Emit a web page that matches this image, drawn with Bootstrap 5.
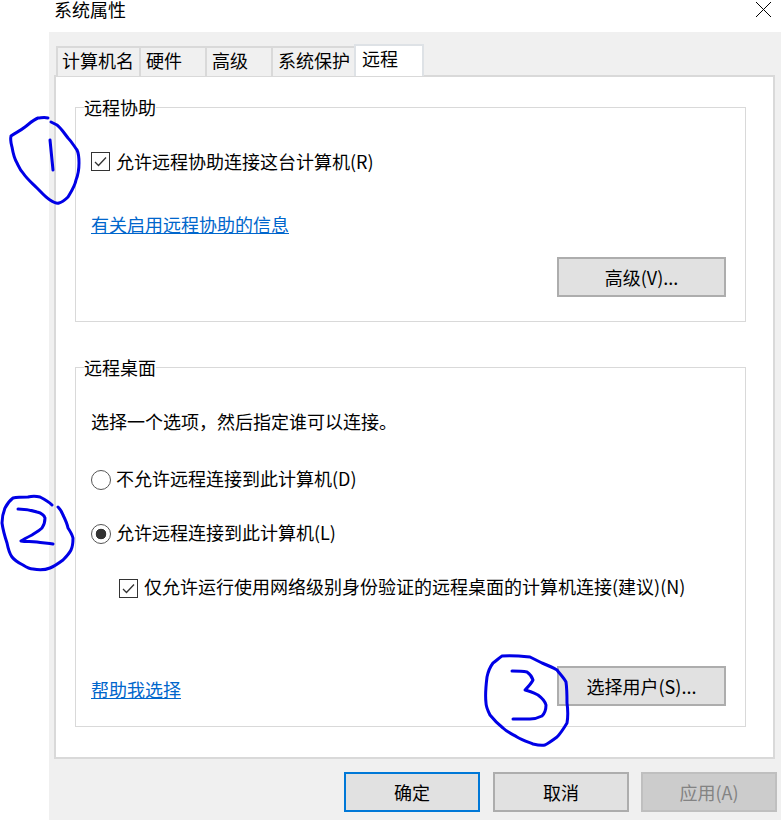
<!DOCTYPE html>
<html lang="zh-CN">
<head>
<meta charset="utf-8">
<title>系统属性</title>
<link href="https://cdn.jsdelivr.net/npm/bootstrap@5.3.0/dist/css/bootstrap.min.css" rel="stylesheet">
<style>
html, body { margin: 0; background: #fff; }
body { width: 781px; height: 820px; overflow: hidden; position: relative; color: #000;
  font-family: "Noto Sans CJK SC", "Liberation Sans", sans-serif; font-size: 18px; line-height: 24px; }
.title-row { height: 32px; padding-left: 54px; padding-right: 10px; line-height: 18px; }
.close-x { width: 15px; height: 15px; margin-top: 2px; }
.sheet { margin-left: 49px; height: 788px; background: #f0f0f0; padding: 12px 6px 0 5px; }
.tab-strip { height: 32px; padding-left: 2px; border: 0; flex-wrap: nowrap; position: relative; z-index: 1; }
.tab-strip .nav-link { height: 30px; margin: 2px 0 0; padding: 0 0 0 5px; border: 2px solid #d9d9d9; border-bottom: 0; border-right-width: 0; border-radius: 0;
  color: #000; background: #f0f0f0; line-height: 25px; font-size: 18px; white-space: nowrap; }
.tab-strip .nav-link.active { height: 32px; margin-top: 0; background: #fff; border-right-width: 2px; color: #000; padding-left: 6px; }
.tab-strip .nav-link.tab-a { width: 83px; padding-left: 4px; }
.tab-b { width: 66px; } .tab-c { width: 83px; } .tab-d { width: 70px; }
.pane { height: 684px; margin-top: -1px; background: #fff; border: 2px solid #d9d9d9; padding: 0 27px 0 19px; }
.grp { margin: 0; padding: 0 19px 0 15px; border: 1px solid #d9d9d9; min-width: 0; }
.grp legend { float: none; width: auto; margin: 0 0 0 -7px; padding: 0 0; font-size: 18px; line-height: 20px; height: 20px; background: #fff; }
.grp-one { height: 225px; margin-top: 20px; }
.grp-two { height: 370px; margin-top: 35px; }
.opt { display: flex; align-items: center; gap: 6px; margin: 0; min-height: 24px; padding: 0; }
.opt-round { gap: 5px; }
.opt .form-check-input { width: 19px; height: 19px; margin: 0; float: none; flex: none; background-color: #fff; border: 1px solid #333; border-radius: 0; box-shadow: none; background-size: 15px; }
.opt .form-check-input.drop-two { margin-top: 4px; }
.opt .form-check-input[type=radio] { width: 20px; height: 20px; border-radius: 50%; border-color: #555; }
.opt .form-check-input[type=checkbox]:checked { background-image: url("data:image/svg+xml,%3Csvg xmlns='http://www.w3.org/2000/svg' viewBox='0 0 15 15'%3E%3Cpath d='M2 8l3.5 3.5L13 3.5' fill='none' stroke='%23333' stroke-width='1.3'/%3E%3C/svg%3E"); }
.opt .form-check-input[type=radio]:checked { background-image: radial-gradient(circle, #333 0 5px, transparent 5.6px); background-size: 100%; }
.lnk { color: #0066cc; display: inline-block; line-height: 24px; }
.lnk-low { margin-top: 6px; }
.gbtn { flex: none; width: 169px; height: 40px; padding: 0; border: 2px solid #adadad; border-radius: 0; background: #e1e1e1; color: #000; font-size: 18px; line-height: 36px; }
.gbtn.main { border-color: #0078d7; }
.gbtn.off, .gbtn.off:disabled { background: #ccc; border-color: #bfbfbf; color: #838383; opacity: 1; margin-left: -1px; }
.foot-btn { width: 136px; }
.foot-row { margin-top: 13px; gap: 13px; margin-left: 290px; }
.top-a { margin-top: 32px; } .top-b { margin-top: 39px; } .top-c { margin-top: 21px; }
.top-d { margin-top: 32px; } .top-e { margin-top: 33px; } .top-f { margin-top: 30px; } .top-g { margin-top: 30px; }
.indent-a { margin-left: 28px; }
.row-end { margin-top: 68px; }
.ink { position: absolute; left: 0; top: 0; pointer-events: none; }
.ink path { fill: none; stroke: #0000e6; stroke-width: 3; stroke-linecap: round; stroke-linejoin: round; }
</style>
</head>
<body>
<div class="title-row d-flex justify-content-between align-items-start">
  <span>系统属性</span>
  <svg class="close-x" viewBox="0 0 15 15"><path d="M0 0L15 15M15 0L0 15" stroke="#000" stroke-width="1" fill="none"/></svg>
</div>
<div class="sheet">
  <ul class="nav nav-tabs tab-strip">
    <li class="nav-item"><a class="nav-link tab-a" href="#">计算机名</a></li>
    <li class="nav-item"><a class="nav-link tab-b" href="#">硬件</a></li>
    <li class="nav-item"><a class="nav-link tab-b" href="#">高级</a></li>
    <li class="nav-item"><a class="nav-link tab-c" href="#">系统保护</a></li>
    <li class="nav-item"><a class="nav-link tab-d active" href="#">远程</a></li>
  </ul>
  <div class="pane">
    <fieldset class="grp grp-one">
      <legend>远程协助</legend>
      <label class="opt top-a"><input class="form-check-input" type="checkbox" checked>允许远程协助连接这台计算机(R)</label>
      <div class="top-b"><a class="lnk" href="#">有关启用远程协助的信息</a></div>
      <div class="d-flex justify-content-end top-c"><button class="btn gbtn" type="button">高级(V)...</button></div>
    </fieldset>
    <fieldset class="grp grp-two">
      <legend>远程桌面</legend>
      <div class="top-d">选择一个选项，然后指定谁可以连接。</div>
      <label class="opt opt-round top-e"><input class="form-check-input drop-two" type="radio" name="rd">不允许远程连接到此计算机(D)</label>
      <label class="opt opt-round top-f"><input class="form-check-input drop-two" type="radio" name="rd" checked>允许远程连接到此计算机(L)</label>
      <label class="opt top-g indent-a"><input class="form-check-input drop-two" type="checkbox" checked>仅允许运行使用网络级别身份验证的远程桌面的计算机连接(建议)(N)</label>
      <div class="d-flex justify-content-between align-items-center row-end">
        <a class="lnk lnk-low" href="#">帮助我选择</a>
        <button class="btn gbtn" type="button">选择用户(S)...</button>
      </div>
    </fieldset>
  </div>
  <div class="d-flex foot-row">
    <button class="btn gbtn foot-btn main" type="button">确定</button>
    <button class="btn gbtn foot-btn" type="button">取消</button>
    <button class="btn gbtn foot-btn off" type="button" disabled>应用(A)</button>
  </div>
</div>
<svg class="ink" width="781" height="820" viewBox="0 0 781 820">
  <path d="M48 118C44 117 41 118 38 118C33 120 29 124 25 127C20 131 15 133 11 136C10 140 11 143 12 147C13 153 14 158 17 163C19 167 20 170 23 173C27 179 32 183 37 188C41 192 45 197 50 200C53 202 56 204 59 203C63 202 65 200 68 197C71 192 75 186 76 180C78 175 79 169 79 163C79 158 79 154 77 150C74 146 72 142 68 138C64 133 61 128 57 125C55 124 53 123 51 122"/>
  <path d="M50 140L53 170"/>
  <path d="M52 505C48 501 44 499 40 497C36 496 32 496 28 497C23 497 18 497 13 498C9 501 7 504 5 508C3 513 2 518 2 523C3 530 5 537 7 543C8 548 9 553 12 557C15 561 19 563 23 565C26 567 29 569 33 569C38 570 45 570 50 568C55 566 59 563 63 560C66 557 69 554 71 550C73 546 73 542 73 538C72 534 70 531 68 528C67 523 65 519 63 515C62 512 60 509 58 507"/>
  <path d="M18 509C24 509 31 510 37 512C41 513 44 515 45 518C45 522 44 525 42 528C39 531 35 533 32 535C28 537 24 539 21 541C26 542 32 541 37 542C42 543 48 543 53 544"/>
  <path d="M502 656C511 655 521 656 530 657C534 659 538 661 542 663C547 665 552 667 557 670C560 674 564 678 566 682C567 689 567 696 567 703C568 710 568 717 567 723C564 728 561 733 557 737C553 740 549 743 545 745C541 746 537 745 533 744C528 742 522 740 517 737C512 734 507 732 503 728C498 724 494 720 490 715C488 711 486 707 486 703C485 695 486 685 487 677C488 672 490 667 493 663C496 661 499 658 502 656"/>
  <path d="M512 671C517 671 522 671 527 672C530 674 532 677 533 680C531 684 528 687 525 690C530 691 534 693 538 695C542 698 545 701 546 705C546 709 545 713 542 716C538 718 534 719 530 719C524 719 519 719 513 719"/>
</svg>
<script src="https://cdn.jsdelivr.net/npm/bootstrap@5.3.0/dist/js/bootstrap.bundle.min.js"></script>
</body>
</html>
